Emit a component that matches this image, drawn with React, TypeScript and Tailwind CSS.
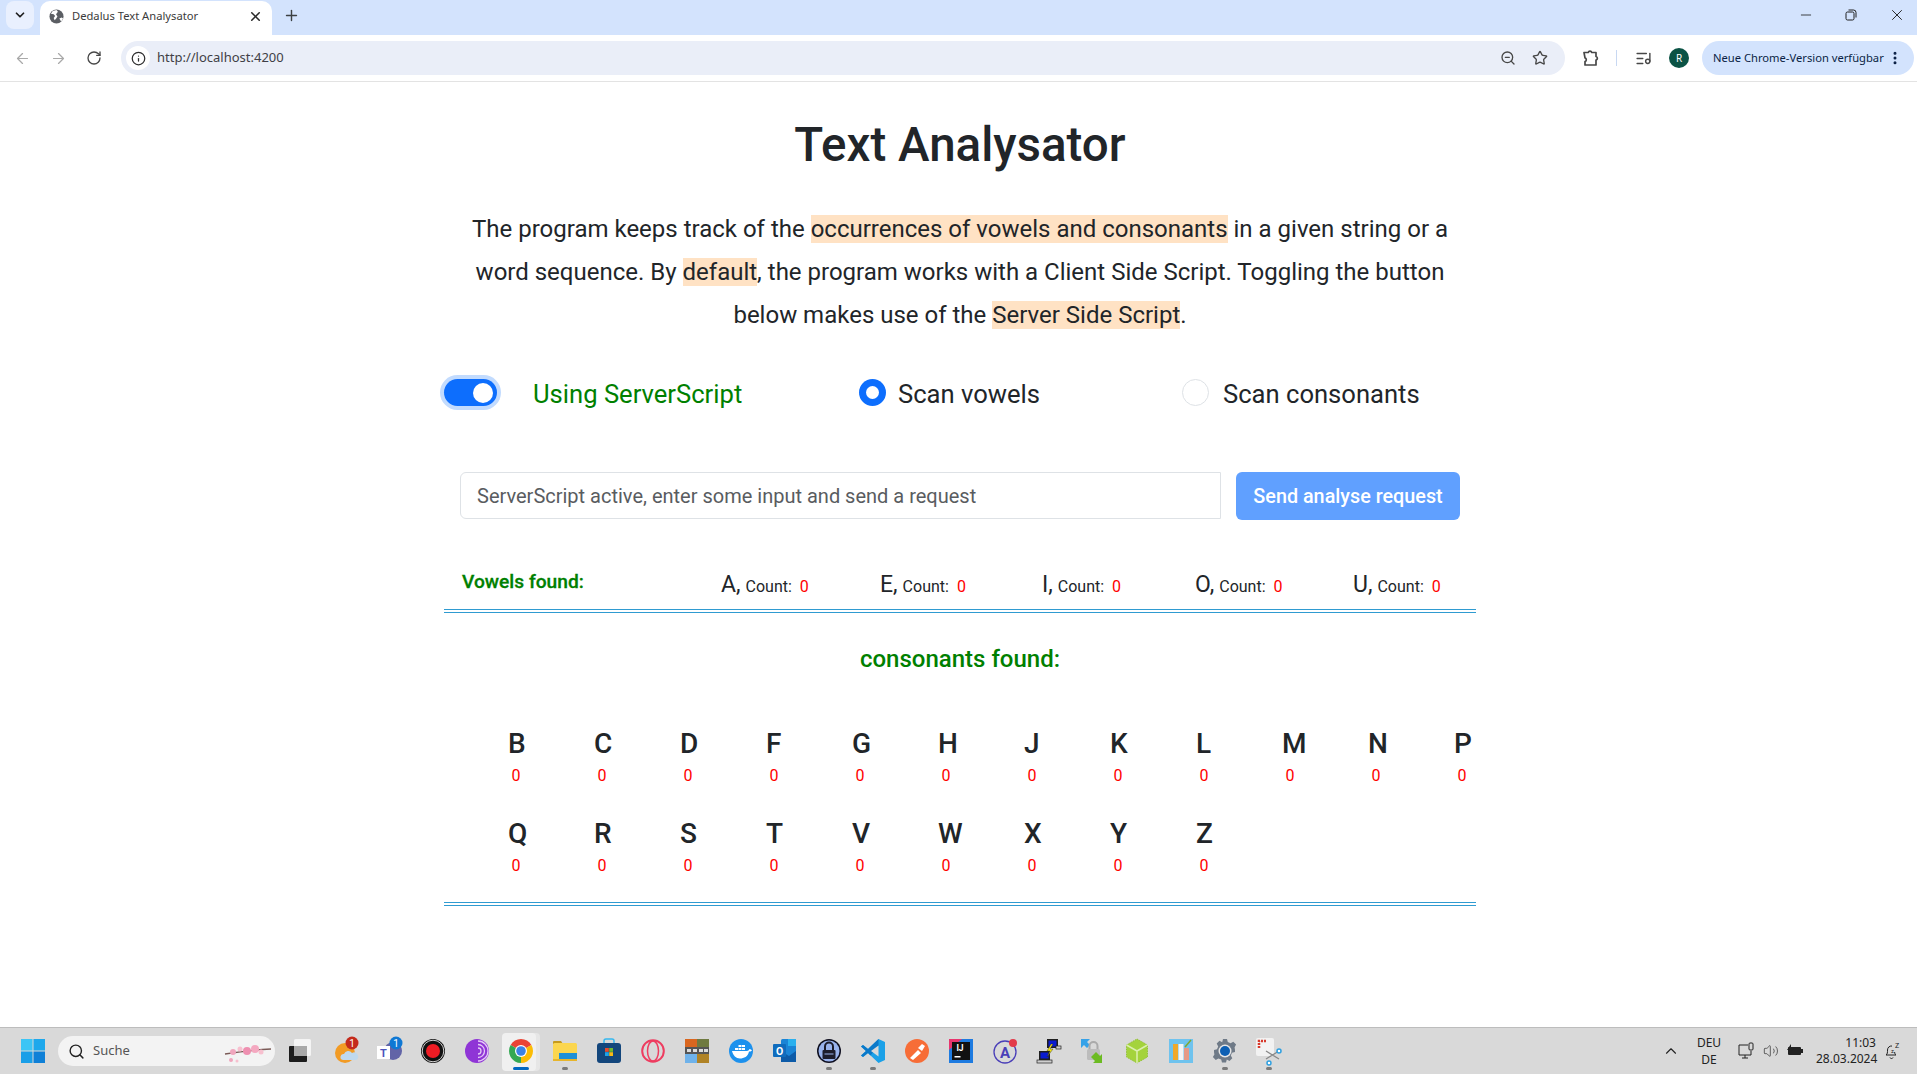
import React from "react";
import { ArrowLeft, ArrowRight, RotateCw, X, Plus, Minus, ChevronDown, ChevronUp, Star, ZoomOut, ListMusic, EllipsisVertical, Search, Volume2, Info } from "lucide-react";

const Mark = ({ children }: { children: React.ReactNode }) => (
  <span className="bg-[#ffe2c4]">{children}</span>
);

const Radio = ({ on }: { on?: boolean }) =>
  on ? (
    <span className="w-[27px] h-[27px] rounded-full bg-[#0d6efd] flex items-center justify-center shrink-0">
      <span className="w-[13px] h-[13px] rounded-full bg-white" />
    </span>
  ) : (
    <span className="w-[27px] h-[27px] rounded-full bg-white border border-[#dee2e6] shrink-0" />
  );

const Vowel = ({ l, w }: { l: string; w: string }) => (
  <div className={`${w} shrink-0 whitespace-nowrap`}>
    <span className="text-[23px] leading-[26px]">{l},</span>
    <span className="text-[16px] ml-[5px]">Count:</span>
    <span className="text-[16px] ml-[8px] text-[#ff0000]">0</span>
  </div>
);

const Cons = ({ l }: { l: string }) => (
  <div className="flex flex-col h-[90px]">
    <div className="text-[28px] leading-[34px] font-medium text-[#212529] pl-[2px]">{l}</div>
    <div className="text-[16px] leading-[24px] text-[#ff0000] mt-[3px] pl-[5.5px]">0</div>
  </div>
);

const Tile = ({ children, dot, active }: { children: React.ReactNode; dot?: boolean; active?: boolean }) => (
  <div className="w-[44px] h-full shrink-0 relative flex items-center justify-center">
    {active && (
      <>
        <div className="absolute left-[7px] top-[5px] w-[34px] h-[38px] rounded-[4px] bg-[#e6e6e6]" />
        <div className="absolute left-[3px] top-[5px] w-[34px] h-[38px] rounded-[4px] bg-[#f0f0f0]" />
        <div className="absolute left-[14px] bottom-[4px] w-[16px] h-[3px] rounded-full bg-[#0067c0]" />
      </>
    )}
    {dot && <div className="absolute left-[19px] bottom-[4px] w-[6px] h-[3px] rounded-full bg-[#7a7a7a]" />}
    <svg width="26" height="26" viewBox="0 0 26 26" className="relative overflow-visible">{children}</svg>
  </div>
);

const Badge = ({ n, x, y, c }: { n: string; x: number; y: number; c: string }) => (
  <g>
    <circle cx={x} cy={y} r="6.5" fill={c} />
    <text x={x} y={y + 3.5} textAnchor="middle" fontSize="10" fill="#fff" fontFamily="Roboto">{n}</text>
  </g>
);

export default function App() {
  return (
    <div className="w-[1917px] h-[1074px] flex flex-col bg-white overflow-hidden font-[Roboto,sans-serif] text-[#212529]">
      {/* tab strip */}
      <div className="h-[35px] bg-[#d3e3fd] flex items-start shrink-0 relative font-['Noto_Sans',sans-serif]">
        <div className="mt-[1px] ml-[6px] w-[28px] h-[28px] rounded-[8px] bg-[#e9f0fe] flex items-center justify-center">
          <ChevronDown size={14} strokeWidth={3} className="text-[#1f1f1f]" />
        </div>
        <div className="ml-[6px] mt-[1px] w-[232px] h-[34px] bg-white rounded-t-[10px] flex items-center pl-[9px] pr-[9px] pb-[3px] relative">
          <svg width="15" height="15" viewBox="0 0 16 16" className="shrink-0">
            <circle cx="8" cy="8" r="7.5" fill="#5b5e63" />
            <path d="M2 5l3 .5 1.5 2L5 9.500l1 2.500 1.500-1.500L9 8 7.500 5.500 9.500 3 8 1 4 2zM11 10l2.500-1 1.500 1-2 3.500z" fill="#fff" />
          </svg>
          <span className="ml-[8px] text-[11.2px] text-[#3b3b3b] whitespace-nowrap">Dedalus Text Analysator</span>
          <X size={15} strokeWidth={2.5} className="ml-auto text-[#2a2a2a]" />
        </div>
        <Plus size={17} strokeWidth={2} className="ml-[11px] mt-[7px] text-[#3c4043]" />
        <div className="ml-auto flex items-center h-[30px] text-[#1f1f1f]">
          <Minus size={16} strokeWidth={1.25} />
          <svg width="14" height="14" viewBox="0 0 14 14" fill="none" stroke="#1f1f1f" strokeWidth="1" className="ml-[30px]">
            <rect x="2" y="4" width="8" height="8" rx="1.5" />
            <path d="M4.500 2h5a2.500 2.500 0 0 1 2.500 2.500v5" />
          </svg>
          <X size={18} strokeWidth={1.25} className="ml-[30px] mr-[11px]" />
        </div>
      </div>

      {/* toolbar */}
      <div className="h-[47px] bg-white border-b border-[#e3e3e3] flex items-center shrink-0 font-['Noto_Sans',sans-serif]">
        <ArrowLeft size={17} strokeWidth={1.75} className="ml-[14px] text-[#a9a9a9]" />
        <ArrowRight size={17} strokeWidth={1.75} className="ml-[19px] text-[#a9a9a9]" />
        <RotateCw size={16} strokeWidth={2} className="ml-[19px] text-[#474747]" />
        <div className="ml-[19px] w-[1444px] h-[34px] rounded-full bg-[#eaeef8] flex items-center pl-[5px] pr-[17px]">
          <span className="w-[24px] h-[24px] rounded-full bg-white flex items-center justify-center">
            <Info size={15} strokeWidth={2} className="text-[#2d2d2d]" />
          </span>
          <span className="ml-[7px] text-[13px] text-[#3f3f46]">http://localhost:4200</span>
          <ZoomOut size={16} strokeWidth={2} className="ml-auto text-[#474747]" />
          <Star size={16} strokeWidth={2} className="ml-[16px] text-[#474747]" />
        </div>
        <svg width="18" height="18" viewBox="0 0 18 18" fill="none" stroke="#474747" strokeWidth="1.700" strokeLinejoin="round" className="ml-[17px]">
          <path d="M2 3.500h4.200a1.900 1.900 0 0 1 3.600 0H14v4a1.800 1.800 0 0 1 0 3.500V16H3v-3.500a1.900 1.900 0 0 0 0-3.600z" />
        </svg>
        <div className="ml-[16px] w-[1px] h-[16px] bg-[#c8d8f2]" />
        <ListMusic size={17} strokeWidth={2} className="ml-[18px] text-[#474747]" />
        <span className="ml-[17px] w-[20px] h-[20px] rounded-full bg-[#0b5345] text-white text-[10px] flex items-center justify-center">R</span>
        <div className="ml-[13px] w-[212px] h-[34px] rounded-full bg-[#d3e3fd] flex items-center pl-[11px] text-[11.2px] text-[#0a1f44] whitespace-nowrap">
          Neue Chrome-Version verfügbar
          <EllipsisVertical size={16} strokeWidth={2.5} className="ml-[3px] text-[#0a1f44]" />
        </div>
      </div>

      {/* page */}
      <main className="flex-1 relative">
        <div className="ml-[444px] w-[1032px]">
          <h1 className="mt-[34px] text-center text-[47.5px] leading-[58px] font-medium">Text Analysator</h1>
          <p className="mt-[34px] mx-auto w-[1000px] text-center text-[24px] leading-[43px]">
            The program keeps track of the <Mark>occurrences of vowels and consonants</Mark> in a given string or a word sequence. By <Mark>default</Mark>, the program works with a Client Side Script. Toggling the button below makes use of the <Mark>Server Side Script</Mark>.
          </p>

          <div className="mt-[42px] flex items-center h-[27px] text-[25.6px]">
            <div className="w-[415px] flex items-center shrink-0">
              <span className="w-[53px] h-[27px] rounded-full bg-[#0d6efd] shadow-[0_0_0_4px_#c2dbfe] flex items-center justify-end pr-[4px]">
                <span className="w-[20px] h-[20px] rounded-full bg-white" />
              </span>
              <span className="ml-[36px] mt-[3px] text-[#008000]">Using ServerScript</span>
            </div>
            <div className="w-[323px] flex items-center shrink-0">
              <Radio on />
              <span className="ml-[12px] mt-[3px]">Scan vowels</span>
            </div>
            <div className="flex items-center">
              <Radio />
              <span className="ml-[14px] mt-[3px]">Scan consonants</span>
            </div>
          </div>

          <div className="mt-[66px] flex items-start pl-[16px]">
            <input
              readOnly
              placeholder="ServerScript active, enter some input and send a request"
              className="w-[761px] h-[47px] border border-[#dee2e6] rounded-l-[6px] px-[16px] text-[20px] bg-white placeholder:text-[#595c5f] outline-none"
            />
            <button className="ml-[15px] w-[224px] h-[48px] pt-[1px] rounded-[6px] bg-[#60a0ff] text-white text-[19.8px] font-medium">
              Send analyse request
            </button>
          </div>

          <div className="mt-[52px] h-[41px] border-b-[4px] border-double border-[#2f9bd1] flex items-start">
            <div className="w-[277px] pl-[18px] text-[19.2px] leading-[28px] font-medium text-[#008000] shrink-0 mt-[-4px] [-webkit-text-stroke:0.3px_#008000]">Vowels found:</div>
            <Vowel l="A" w="w-[159px]" />
            <Vowel l="E" w="w-[162px]" />
            <Vowel l="I" w="w-[153px]" />
            <Vowel l="O" w="w-[158px]" />
            <Vowel l="U" w="w-[120px]" />
          </div>

          <h2 className="mt-[32px] text-center text-[24px] leading-[29px] font-medium text-[#008000]">consonants found:</h2>

          <div className="mt-[53px] ml-[62px] w-[1032px] grid grid-cols-[repeat(12,86px)]">
            {["B", "C", "D", "F", "G", "H", "J", "K", "L", "M", "N", "P", "Q", "R", "S", "T", "V", "W", "X", "Y", "Z"].map((l) => (
              <Cons key={l} l={l} />
            ))}
          </div>

          <div className="mt-[-5px] h-[4px] border-b-[4px] border-double border-[#2f9bd1]" />
        </div>
      </main>

      {/* taskbar */}
      <footer className="h-[47px] bg-[#d9d9d9] border-t border-[#bdbdbd] shrink-0 flex items-center font-['Noto_Sans',sans-serif]">
        <svg width="24" height="24" viewBox="0 0 24 24" className="ml-[21px] shrink-0">
          <rect x="0" y="0" width="11.500" height="11.500" fill="#3cc5f5" />
          <rect x="12.500" y="0" width="11.500" height="11.500" fill="#1ea8ec" />
          <rect x="0" y="12.500" width="11.500" height="11.500" fill="#1a9fe8" />
          <rect x="12.500" y="12.500" width="11.500" height="11.500" fill="#0f80d7" />
        </svg>
        <div className="ml-[13px] w-[217px] h-[30px] rounded-full bg-[#f3f3f3] flex items-center pl-[10px] relative shrink-0">
          <Search size={17} strokeWidth={2} className="text-[#222]" />
          <span className="ml-[8px] text-[13px] text-[#555]">Suche</span>
          <svg width="50" height="26" viewBox="0 0 50 26" className="absolute right-[2px] top-[2px]">
            <path d="M2 16C14 14 30 12 48 11" stroke="#7a5a56" strokeWidth="1.300" fill="none" />
            <circle cx="10" cy="14" r="3" fill="#f0a6bd" /><circle cx="17" cy="11" r="2.500" fill="#f7c0cf" /><circle cx="24" cy="13" r="4" fill="#ee8fb0" /><circle cx="32" cy="11" r="4" fill="#f4a8c0" /><circle cx="38" cy="14" r="2.500" fill="#f7c0cf" /><circle cx="8" cy="22" r="2" fill="#f0a6bd" /><circle cx="14" cy="23" r="1.500" fill="#f7c0cf" />
          </svg>
        </div>
        <div className="ml-[4px] flex items-center h-full">
          <Tile>
            <rect x="6" y="1" width="17" height="17" rx="1.500" fill="#f4f4f4" />
            <rect x="1" y="8" width="18" height="16" rx="1" fill="#1c1c1c" />
            <rect x="6" y="8" width="13" height="10" fill="#a8a8a8" />
          </Tile>
          <Tile>
            <circle cx="13" cy="15" r="10" fill="#f29b24" />
            <path d="M11 22a3 3 0 0 1 1-6 4.500 4.500 0 0 1 8-1 3.500 3.500 0 0 1 4 7z" fill="#bfd9ee" />
            <Badge n="1" x={20} y={5} c="#c42b1c" />
          </Tile>
          <Tile>
            <circle cx="17" cy="13" r="9" fill="#6264a7" />
            <rect x="1" y="8" width="13" height="13" fill="#fff" />
            <text x="7.500" y="18.500" textAnchor="middle" fontSize="11" fontWeight="700" fill="#4b53bc" fontFamily="Roboto">T</text>
            <Badge n="1" x={20} y={5} c="#0f78d4" />
          </Tile>
          <Tile>
            <circle cx="13" cy="13" r="12" fill="#111" />
            <circle cx="13" cy="13" r="10.800" fill="none" stroke="#d4d4d4" strokeWidth="1" />
            <circle cx="13" cy="13" r="7" fill="#f01c24" />
          </Tile>
          <Tile>
            <circle cx="13" cy="13" r="12" fill="#8f35d6" />
            <path d="M14 3a10 10 0 0 1 0 20M14 6.500a6.500 6.500 0 0 1 0 13M14 10a3 3 0 0 1 0 6" stroke="#e5c8f7" strokeWidth="1.300" fill="none" />
          </Tile>
          <Tile active>
            <path d="M2.610 7A12 12 0 0 1 23.390 7L13 13z" fill="#ea4335" />
            <path d="M23.390 7A12 12 0 0 1 13 25L13 13z" fill="#fbbc05" />
            <path d="M13 25A12 12 0 0 1 2.610 7L13 13z" fill="#34a853" />
            <circle cx="13" cy="13" r="6" fill="#fff" />
            <circle cx="13" cy="13" r="4.800" fill="#3b82e6" />
          </Tile>
          <Tile dot>
            <path d="M1 4a1 1 0 0 1 1-1h7l2 3h-10z" fill="#c69a1e" />
            <rect x="1" y="5" width="24" height="18" rx="1.500" fill="#fbd64f" />
            <rect x="7" y="15" width="18" height="8" fill="#1e90d8" />
            <rect x="1" y="21" width="24" height="2" fill="#e7b52c" />
          </Tile>
          <Tile>
            <path d="M8 6V3a2 2 0 0 1 2-2h6a2 2 0 0 1 2 2v3" stroke="#35b8ef" strokeWidth="1.500" fill="none" />
            <rect x="1" y="5" width="24" height="20" rx="3" fill="#13467c" />
            <rect x="9" y="10" width="3.800" height="3.800" fill="#e84a2c" /><rect x="13.200" y="10" width="3.800" height="3.800" fill="#6fb82e" /><rect x="9" y="14.200" width="3.800" height="3.800" fill="#1ea3e8" /><rect x="13.200" y="14.200" width="3.800" height="3.800" fill="#f7b916" />
          </Tile>
          <Tile>
            <circle cx="13" cy="13" r="10.800" fill="none" stroke="#ee3d60" strokeWidth="2" />
            <ellipse cx="13" cy="13" rx="5.500" ry="10" fill="none" stroke="#ee3d60" strokeWidth="1.500" />
          </Tile>
          <Tile>
            <rect x="1" y="1" width="12" height="8" fill="#d9661f" /><rect x="13" y="1" width="12" height="8" fill="#6f7a40" />
            <rect x="1" y="9" width="24" height="7" fill="#555" />
            <rect x="1" y="16" width="12" height="9" fill="#6fb2ea" /><rect x="13" y="16" width="12" height="9" fill="#b08326" />
            <rect x="3" y="11" width="4" height="3" fill="#ddd" /><rect x="9" y="11" width="4" height="3" fill="#ddd" /><rect x="15" y="11" width="4" height="3" fill="#ddd" /><rect x="20" y="11" width="4" height="3" fill="#ddd" />
          </Tile>
          <Tile>
            <circle cx="13" cy="13" r="12" fill="#1d91ed" />
            <path d="M4 13h15c1 0 2-1 2.500-2 1 0 2 1 2.500 1.500-1 1-2 1-3 1-1 5-5 7-9 7-4 0-7-3-8-7.500z" fill="#fff" />
            <path d="M7 10h3v2H7zM10.500 10h3v2h-3zM14 10h3v2h-3zM10.500 7h3v2h-3zM14 7h3v2h-3z" fill="#fff" />
          </Tile>
          <Tile>
            <rect x="9" y="1" width="15" height="23" rx="1.500" fill="#1a84d6" />
            <rect x="16" y="1" width="8" height="7" fill="#2ab0ee" />
            <path d="M9 13l8 5 7-5v11H9z" fill="#0d5ba8" />
            <rect x="1" y="6" width="13" height="13" rx="1" fill="#0f6cbd" />
            <text x="7.500" y="16.500" textAnchor="middle" fontSize="10.500" fontWeight="700" fill="#fff" fontFamily="Roboto">O</text>
          </Tile>
          <Tile dot>
            <circle cx="13" cy="13" r="12" fill="#0f0f1f" />
            <circle cx="13" cy="13" r="10.500" fill="#98b2ec" />
            <path d="M9 12V8.500a4 4 0 0 1 8 0V12" stroke="#1c1c2c" strokeWidth="2" fill="none" />
            <rect x="6.500" y="12" width="13" height="9" rx="1" fill="#1c1c2c" />
            <rect x="8.500" y="15.500" width="9" height="1" fill="#98b2ec" />
          </Tile>
          <Tile dot>
            <path d="M18.500 1L25 4v18l-6.500 3L8 15l-5 4-2-1.500L6 13 1 8.500 3 7l5 4z" fill="#1ba1e8" />
            <path d="M18.500 1L8 11 3 7 1 8.500 6 13l-5 4.500L3 19l5-4 2.500 2.500 8-10z" fill="#0b79c9" />
            <path d="M18.500 7.500L11 13l7.500 5.500z" fill="#d9d9d9" />
          </Tile>
          <Tile>
            <circle cx="13" cy="13" r="12" fill="#f76d37" />
            <path d="M6 20l8-8 3 3-8 7zM14 10l4-4 3 2-3 5z" fill="#fff" />
          </Tile>
          <Tile>
            <rect x="1" y="1" width="24" height="24" fill="#1e7be0" />
            <path d="M1 1h13L1 12z" fill="#e8356e" />
            <rect x="4" y="4" width="18" height="18" fill="#111" />
            <text x="12" y="13" textAnchor="middle" fontSize="8.500" fontWeight="700" fill="#fff" fontFamily="Roboto">IJ</text>
            <rect x="6.500" y="18" width="6" height="1.500" fill="#fff" />
          </Tile>
          <Tile>
            <circle cx="13" cy="14" r="11" fill="none" stroke="#4a3fb8" strokeWidth="1.300" />
            <text x="13" y="19.500" textAnchor="middle" fontSize="15" fontWeight="700" fill="#4a3fb8" fontFamily="Roboto">A</text>
            <circle cx="21" cy="5" r="4" fill="#e33a4a" />
          </Tile>
          <Tile>
            <rect x="11" y="1" width="11" height="9" fill="#1e1e1e" /><rect x="12.500" y="2.500" width="8" height="6" fill="#0a1bd0" />
            <rect x="3" y="13" width="11" height="9" fill="#1e1e1e" /><rect x="4.500" y="14.500" width="8" height="6" fill="#0a1bd0" />
            <rect x="1" y="22" width="15" height="3" fill="#cfcfcf" stroke="#222" strokeWidth=".7" />
            <rect x="20" y="8" width="5" height="3" fill="#cfcfcf" stroke="#222" strokeWidth=".7" />
            <path d="M15 6l-4 7h3l-3 6 6-8h-3l3-5z" fill="#f5e616" stroke="#222" strokeWidth=".4" />
          </Tile>
          <Tile>
            <path d="M1 1h9L7 4l3 3-3 3-3-3-3 3z" fill="#36a2e8" />
            <rect x="7" y="11" width="13" height="11" rx="1.500" fill="#bcbcbc" />
            <path d="M9.500 11V8a4 4 0 0 1 8 0v3" fill="none" stroke="#aaa" strokeWidth="2" />
            <path d="M16 14l4 4 2-2v9h-9l2-2-4-4z" fill="#6cbb22" />
          </Tile>
          <Tile>
            <path d="M13 1l10.500 6v12L13 25 2.500 19V7z" fill="#a4d33c" stroke="#93c03a" strokeDasharray="1.500 1" />
            <path d="M13 13L2.500 7M13 13l10.500-6M13 13v12" stroke="#dcefb0" strokeWidth="1.500" />
          </Tile>
          <Tile>
            <rect x="1" y="1" width="24" height="24" fill="#6fc3ee" />
            <rect x="5" y="6" width="5" height="16" fill="#f0a92b" /><rect x="10.500" y="6" width="5" height="16" fill="#f4f4f4" /><rect x="16" y="10" width="5" height="12" fill="#e69a86" />
            <path d="M17 9l6-7" stroke="#7fa830" strokeWidth="1.500" />
          </Tile>
          <Tile dot>
            <path d="M11 1h4l.8 3 2.800 1.200 2.700-1.500 2.800 2.800-1.500 2.700L23 12v2l-3 .8-1.200 2.800 1.500 2.700-2.800 2.800-2.700-1.500-.8 3h-4l-.8-3-2.800-1.200-2.700 1.500-2.800-2.800 1.500-2.700L2 14v-2l3-.8 1.200-2.800L4.700 5.500l2.800-2.800 2.700 1.500z" fill="#6f7a87" />
            <circle cx="13" cy="13" r="6.500" fill="#e6e6e6" />
            <circle cx="13" cy="13" r="5" fill="#0c5fb4" />
          </Tile>
          <Tile dot>
            <rect x="0" y="0" width="18" height="18" rx="2" fill="#f2f2f2" />
            <path d="M3 10V3h7" stroke="#d8392b" strokeWidth="2.500" strokeDasharray="2 1" fill="none" />
            <path d="M10 13l13 8M10 21l13-8" stroke="#888" strokeWidth="1.300" />
            <circle cx="23" cy="13" r="2" fill="#fff" stroke="#2d9fe0" strokeWidth="1.500" />
            <circle cx="13" cy="25" r="2" fill="#fff" stroke="#2d9fe0" strokeWidth="1.500" />
          </Tile>
        </div>
        <div className="ml-auto flex items-center h-full text-[#222] text-[12px] leading-[16px]">
          <ChevronUp size={18} strokeWidth={1.5} />
          <div className="ml-[15px] w-[28px] text-center">
            DEU<br /><span className="inline-block mt-[1px]">DE</span>
          </div>
          <svg width="18" height="18" viewBox="0 0 18 18" fill="none" stroke="#222" strokeWidth="1" className="ml-[15px]">
            <path d="M10 3H1v10h12v-4M7 13v3M4 16h6" />
            <rect x="11" y="1" width="4" height="7" rx="1" />
          </svg>
          <Volume2 size={16} strokeWidth={1} className="ml-[7px]" />
          <svg width="18" height="16" viewBox="0 0 18 16" className="ml-[6px]">
            <rect x="3" y="4" width="13" height="8" rx="1" fill="#222" />
            <path d="M16 6h2v4h-2zM6 1L2 7h3l-1 5 5-7H6z" fill="#222" />
          </svg>
          <div className="ml-[13px] w-[60px] text-right">
            11:03<br /><span className="whitespace-nowrap">28.03.2024</span>
          </div>
          <svg width="17" height="18" viewBox="0 0 17 18" fill="none" stroke="#222" strokeWidth="1" className="ml-[8px] mr-[16px]">
            <path d="M2 13c1.500-1 1.500-2.500 1.500-5A4 4 0 0 1 8 4v0M2 13h10c-1-.8-1.300-1.600-1.400-3M6 15.500a1.600 1.600 0 0 0 3 0" />
            <text x="7" y="10.500" fontSize="6" fill="#222" stroke="none" fontFamily="Roboto">z</text>
            <text x="11" y="6" fontSize="7" fill="#222" stroke="none" fontFamily="Roboto">Z</text>
          </svg>
        </div>
      </footer>
    </div>
  );
}
